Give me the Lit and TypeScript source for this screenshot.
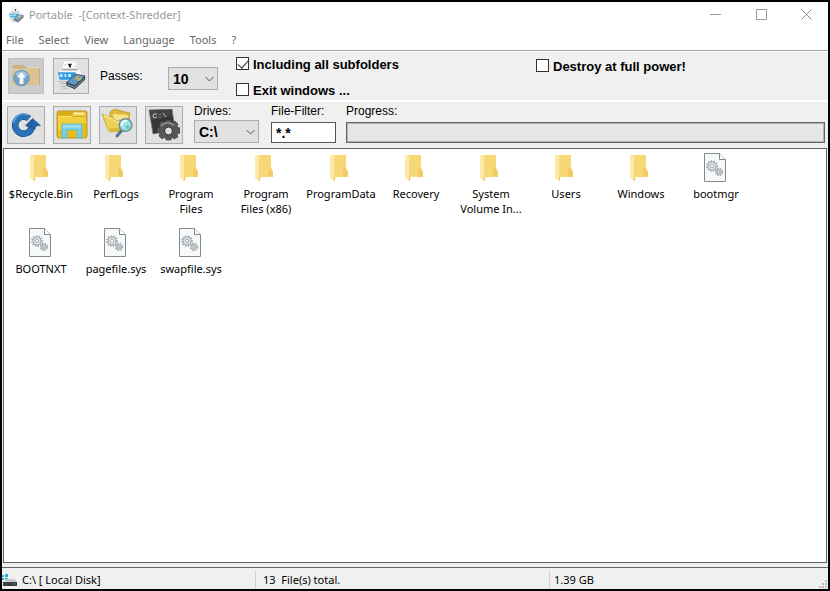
import { LitElement, html, css, svg, TemplateResult } from "lit";
import { customElement, property } from "lit/decorators.js";

const shredderIcon = svg`
  <svg viewBox="0 0 32 34" aria-hidden="true">
    <path d="M8 1h13l2 9H6z" fill="#fdfdfd" stroke="#d2d2d4" stroke-width=".6"/>
    <path d="M13 4h4v1h-1v3h-2V6h-1z" fill="#222"/><path d="M9 5h2M19 7h2" stroke="#bbb"/>
    <path d="M3 12l2-3h19l3 3v5H3z" fill="#fbfbfc" stroke="#c4c6ca" stroke-width=".6"/>
    <path d="M6 10.500h17" stroke="#77797d"/>
    <path d="M2 13h19v8H4z" fill="#2f9be0"/>
    <path d="M4 15h3v3H4zM9 15h2v3H9zM13 15h3v3h-3z" fill="#bfe6fa"/>
    <path d="M2 23h10M4 25h8M5 28h6M7 30h6" stroke="#b4b7bb" stroke-width="1"/>
    <path d="M11 24l10-9 10 2v4L20 31l-9-4z" fill="#2c4355"/>
    <path d="M11 24l10-9 10 2-11 10z" fill="#6f95b4" stroke="#2b3d4a" stroke-width=".6"/>
    <path d="M14 23.500l7-7 4 1-7 7z" fill="#4f9bd5"/>
    <path d="M20 20l3-3 2 1-3 3z" fill="#f1a63a"/>
    <path d="M23 21l3-2.500 2 .5-3 3z" fill="#9ccf5a"/>
    <path d="M12 26l8 3 10-9" stroke="#a8c2d3" fill="none" stroke-width=".8"/>
  </svg>`;

const upFolderIcon = svg`
  <svg viewBox="0 0 32 32" aria-hidden="true">
    <path d="M2 8l1-3h11l2 2h14v18H2z" fill="#cdb283"/>
    <path d="M2 9h14l2-2h12v18H2z" fill="#dcc396"/>
    <path d="M2 9.500h14l2-2h11" stroke="#eadbb9" fill="none"/>
    <path d="M29.500 8v17" stroke="#d1a966"/>
    <circle cx="11.500" cy="18" r="8" fill="#6fa2c4" stroke="#6795b3" stroke-width=".6"/>
    <path d="M5 15a7 6 0 0 1 13 0q-6 4-13 0z" fill="#a0c4da"/>
    <path d="M11.500 12l4.500 5.500h-2.500V24h-4v-6.500H7z" fill="#f5f7f8"/>
  </svg>`;

const refreshIcon = svg`
  <svg viewBox="0 0 32 32" aria-hidden="true">
    <path d="M19 9.500A8.500 8.500 0 1 0 22 18" fill="none" stroke="#174f8e" stroke-width="6.600"/>
    <path d="M19 9.500A8.500 8.500 0 1 0 22 18" fill="none" stroke="#2a72b8" stroke-width="5.400"/>
    <path d="M4 14A9.500 9.500 0 0 1 18 6" fill="none" stroke="#6ea6d8" stroke-width="1.500"/>
    <path d="M15.500 16.500L22.500 9.500l8 7-4.500.5-1 3-6-1.500z" fill="#2262a4" stroke="#174f8e" stroke-width=".6"/>
  </svg>`;

const diskFolderIcon = svg`
  <svg viewBox="0 0 32 32" aria-hidden="true">
    <path d="M1 4q0-2 2-2h26q2 0 2 2v23q0 2-2 2H3q-2 0-2-2z" fill="#e6bd1c" stroke="#a98312" stroke-width=".8"/>
    <path d="M2 8V3h14l2 2h12v3z" fill="#dcae16"/>
    <path d="M17 3.500h11l1 2H18z" fill="#fff1b4"/>
    <path d="M2 7.500h13l2-1.500h13" stroke="#f9e27a" fill="none"/>
    <path d="M2 8h28v6q-14 1-28 8z" fill="#f1cf3c"/>
    <path d="M6 29V15h20v14h-5v-8H11v8z" fill="#72cfe6" stroke="#4ab6d2" stroke-width=".6"/>
    <path d="M7 16h18v3H7z" fill="#97deee"/>
  </svg>`;

const searchFolderIcon = svg`
  <svg viewBox="0 0 32 32" aria-hidden="true">
    <path d="M8 6V3l4-3 4 1 12 3-2 14-14 3z" fill="#dcb83e" stroke="#b9932a" stroke-width=".7"/>
    <path d="M11 5l15 1-1 9-12 2z" fill="#f5e38c"/>
    <path d="M0 5l8 3 7 4 3-1 8 2-4 9-14 1-2-2z" fill="#edd25a" stroke="#bf9d30" stroke-width=".7"/>
    <path d="M2 6.500l6 2.500 7 4 9 .5" stroke="#fff2ac" fill="none"/>
    <path d="M9 23h12l2-5q-8 2-16 1z" fill="#d9b73c"/>
    <path d="M20 21l-5 6" stroke="#56798a" stroke-width="3" stroke-linecap="round"/>
    <circle cx="23.500" cy="16" r="6.300" fill="#9fe0e0" stroke="#6b8e9d" stroke-width="1.500"/>
    <path d="M20 17a4 4 0 0 1 5-5" fill="none" stroke="#effffc" stroke-width="2"/>
    <circle cx="25.500" cy="18" r="2" fill="#6cc7b6"/>
  </svg>`;

const commandIcon = svg`
  <svg viewBox="0 0 32 32" aria-hidden="true">
    <path d="M1 1l23-1 3 21-22 4z" fill="#343537" stroke="#77787a" stroke-width=".8"/>
    <path d="M2 2l21-1 1 6-21 4z" fill="#434446"/>
    <path d="M9 5q-4-1-4 2t4 1M12 5v1M12 8v1M15 4l3 4" stroke="#c4c4c4" fill="none"/>
    <path d="M18 11h5l1 3 3-2 3 3-1 3 3 1v5l-3 1 1 3-4 2-2-2-1 3h-5l-1-3-3 2-3-3 1-3-3-1v-4l3-1-1-4 3-2 3 2z" fill="#555658" stroke="#38393b" stroke-width=".6"/>
    <path d="M13 17q5-6 13-1" stroke="#929395" fill="none" stroke-width="1.500"/>
    <circle cx="20.500" cy="22" r="4" fill="#dcdcdc" stroke="#2c2d2e"/>
  </svg>`;

const folderIcon = svg`
  <svg viewBox="0 0 20 28" aria-hidden="true">
    <path d="M3 1h14v14l2 3v5H4z" fill="#f8d775"/>
    <path d="M14 16l1-2h2l2 4v5h-5z" fill="#f2cb64"/>
    <path d="M1 1h3l3 3v20l-2 3-4-3z" fill="#fdeaa9"/>
    <path d="M6 4v17l-1 6" stroke="#edc45e" fill="none"/>
  </svg>`;

const gear = (x: number, y: number, r: number) => svg`
  <circle cx=${x} cy=${y} r=${r} fill="none" stroke="#a3abb0" stroke-width="1.600" stroke-dasharray="1.6 1.1"/>
  <circle cx=${x} cy=${y} r=${r - 1} fill="#e3e7e9" stroke="#949da2" stroke-width=".8"/>
  <circle cx=${x} cy=${y} r=${r / 3} fill="#fff" stroke="#949da2" stroke-width=".8"/>`;

const systemFileIcon = svg`
  <svg viewBox="0 0 22 29" aria-hidden="true">
    <path d="M.5.5h15l6 6v22H.5z" fill="#f6f8f9" stroke="#858a8d"/>
    <path d="M15.500.5v6h6" fill="#fff" stroke="#858a8d"/>
    ${gear(8, 13, 5)}${gear(15, 19, 3.4)}
  </svg>`;

const driveIcon = svg`
  <svg viewBox="0 0 15 13" aria-hidden="true">
    <path d="M0 1h2v2H0zM3 0h3v3H3zM0 4h2v2H0zM3 4h3v2H3z" fill="#1fb2df"/>
    <path d="M2 8l2-3h9l2 3z" fill="#c9cccd"/>
    <path d="M1 8h14v4H1z" fill="#3b4042"/>
    <path d="M12 10h1" stroke="#7df08a"/>
  </svg>`;

interface Entry {
  name: string;
  folder: boolean;
}

const folders = [
  "$Recycle.Bin", "PerfLogs", "Program Files", "Program Files (x86)", "ProgramData",
  "Recovery", "System Volume In...", "Users", "Windows",
];
const files = ["bootmgr", "BOOTNXT", "pagefile.sys", "swapfile.sys"];
const entries: Entry[] = [
  ...folders.map((name) => ({ name, folder: true })),
  ...files.map((name) => ({ name, folder: false })),
];

@customElement("file-entry")
export class FileEntry extends LitElement {
  @property() name = "";
  @property({ type: Boolean }) folder = false;

  static styles = css`
    :host { display: block; }
    .entry {
      width: 74px;
      padding: 4px 0 0;
      border: 0;
      background: none;
      color: #000;
      font: 11px/15px "Noto Sans", "Open Sans", sans-serif;
      display: flex;
      flex-direction: column;
      align-items: center;
    }
    .picture { height: 29px; width: 24px; margin-bottom: 4px; }
    .picture svg { display: block; height: 29px; width: 22px; }
    .folder svg { width: 20px; height: 28px; margin-top: 1px; }
    .name { min-width: min-content; max-width: 66px; }
  `;

  render() {
    return html`<button class="entry">
      <span class="picture ${this.folder ? "folder" : ""}">${this.folder ? folderIcon : systemFileIcon}</span>
      <span class="name">${this.name}</span>
    </button>`;
  }
}

@customElement("app-root")
export class AppRoot extends LitElement {
  static styles = css`
    :host {
      display: block;
      --ui: "Noto Sans", "Open Sans", sans-serif;
      --classic: "Liberation Sans", Arial, sans-serif;
      --face: #f0f0f0;
    }
    * { box-sizing: border-box; }
    button, input, select { margin: 0; font: inherit; color: inherit; }
    svg { display: block; }
    .window {
      min-height: 100vh;
      display: flex;
      flex-direction: column;
      border: 2px solid #000;
      background: var(--face);
      font: 11px/16px var(--ui);
      color: #000;
    }
    .titlebar {
      display: flex;
      align-items: center;
      height: 26px;
      padding-left: 6px;
      background: #fff;
      color: #999;
    }
    .titlebar .app { width: 16px; height: 16px; margin-right: 5px; opacity: .8; }
    .title { flex: 1; margin: 0; font: inherit; white-space: pre; }
    .caption {
      width: 46px;
      height: 24px;
      padding: 0;
      border: 0;
      background: none;
      display: grid;
      place-items: center;
      align-self: flex-start;
    }
    .caption:last-child { width: 44px; }
    .caption svg { width: 11px; height: 11px; }
    .menu {
      display: flex;
      gap: 15px;
      height: 22px;
      padding: 3px 4px 0;
      background: #fff;
      color: #666;
    }
    .menu button { padding: 0; border: 0; background: none; align-self: flex-start; line-height: 18px; }
    .tools { display: flex; font-family: var(--classic); font-size: 12px; }
    .tools.main {
      height: 52px;
      padding: 6px 6px 0;
      border-top: 1px solid #a0a0a0;
      border-bottom: 2px solid #fff;
      box-shadow: inset 0 1px #fff;
    }
    .tools.drive { padding: 4px 3px 0 5px; height: 46px; }
    .tool {
      flex: none;
      width: 38px;
      height: 38px;
      margin-right: 8px;
      padding: 2px;
      border: 1px solid #adadad;
      background: #e1e1e1;
      display: grid;
      place-items: center;
    }
    .tool svg { width: 32px; height: 32px; }
    .main .tool { width: 36px; height: 36px; margin: 1px 9px 0 0; padding: 0; }
    .tool:disabled { background: #ccc; border-color: #bfbfbf; }
    .passes { display: flex; padding-left: 2px; width: 138px; }
    .passes label { width: 68px; padding-top: 11px; }
    .passes .combo { width: 50px; margin-top: 10px; }
    .combo { display: grid; height: 23px; font-weight: bold; }
    .combo select, .combo svg { grid-area: 1 / 1; }
    .combo select {
      appearance: none;
      width: 100%;
      padding: 0 4px;
      border: 1px solid #adadad;
      border-radius: 0;
      background: #e1e1e1;
      font-size: 14px;
      height: 23px;
    }
    .combo svg { width: 9px; height: 6px; justify-self: end; align-self: center; margin-right: 4px; pointer-events: none; }
    .checks { display: grid; grid-template-rows: 26px 20px; align-content: start; }
    .checks.scope { width: 300px; }
    .checks.power { padding-top: 2px; }
    .check { display: flex; align-items: flex-start; gap: 4px; font: bold 13px/15px var(--classic); white-space: nowrap; }
    .check input {
      appearance: none;
      width: 13px;
      height: 13px;
      border: 1px solid #333;
      background: #fff;
      display: grid;
      place-items: center;
    }
    .check input:checked::after {
      content: "";
      width: 9px;
      height: 5px;
      border: solid #333;
      border-width: 0 0 1px 1px;
      transform: translateY(-1px) rotate(-48deg);
    }
    .field { display: flex; flex-direction: column; margin-left: 12px; }
    .field label { height: 16px; line-height: 12px; margin-top: -1px; }
    .field.drives { margin-left: 3px; width: 65px; }
    .field.drives .combo { margin-top: -1px; }
    .field.filter { width: 65px; }
    .field.progress { flex: 1; margin-left: 10px; }
    .field input {
      width: 100%;
      height: 21px;
      margin-top: 1px;
      padding: 0 4px;
      border: 1px solid #555;
      background: #fff;
      font-size: 14px;
      font-weight: bold;
    }
    progress {
      appearance: none;
      display: block;
      width: 100%;
      height: 21px;
      margin-top: 1px;
      border: 1px solid #646464;
      box-shadow: inset 0 0 0 1px #b4b4b4;
      background: #e6e6e6;
    }
    progress::-webkit-progress-bar { background: transparent; }
    .list {
      flex: 1;
      display: grid;
      grid-template-columns: repeat(auto-fill, 75px);
      grid-auto-rows: 75px;
      align-content: start;
      margin: 0 1px 4px;
      border: 1px solid #646464;
      background: #fff;
    }
    .status {
      display: grid;
      grid-template-columns: 253fr 294fr 279fr;
      height: 22px;
      border-top: 1px solid #646464;
      padding-top: 2px;
      line-height: 18px;
      white-space: pre;
    }
    .pane { display: flex; align-items: flex-end; padding-left: 5px; }
    .pane + .pane { border-left: 1px solid #d0d0d0; padding-left: 7px; }
    .pane.disk { padding-left: 0; gap: 5px; }
    .pane.disk svg { width: 15px; height: 13px; margin-bottom: 2px; }
    .pane.size { padding-left: 4px; }
    .pane.size svg { width: 10px; height: 10px; margin-left: auto; }
  `;

  private tool(label: string, icon: TemplateResult | unknown, disabled = false) {
    return html`<button class="tool" aria-label=${label} title=${label} ?disabled=${disabled}>${icon}</button>`;
  }

  private combo(id: string, value: string) {
    return html`<div class="combo">
      <select id=${id}><option>${value}</option></select>
      <svg viewBox="0 0 9 6" aria-hidden="true"><path d="M.5 1l4 4 4-4" fill="none" stroke="#555"/></svg>
    </div>`;
  }

  render() {
    return html`
      <div class="window">
        <header class="titlebar">
          <span class="app">${shredderIcon}</span>
          <h1 class="title">Portable  -[Context-Shredder]</h1>
          <button class="caption" aria-label="Minimize"><svg viewBox="0 0 11 11"><path d="M0 5.500h11" stroke="#999"/></svg></button>
          <button class="caption" aria-label="Maximize"><svg viewBox="0 0 11 11"><path d="M.5.5h10v10H.5z" stroke="#999" fill="none"/></svg></button>
          <button class="caption" aria-label="Close"><svg viewBox="0 0 11 11"><path d="M.5.5l10 10M10.500.5l-10 10" stroke="#888"/></svg></button>
        </header>
        <nav class="menu">
          ${["File", "Select", "View", "Language", "Tools", "?"].map((item) => html`<button>${item}</button>`)}
        </nav>
        <div class="tools main">
          ${this.tool("Up one level", upFolderIcon, true)}
          ${this.tool("Shred", shredderIcon)}
          <div class="passes"><label for="passes">Passes:</label>${this.combo("passes", "10")}</div>
          <div class="checks scope">
            <label class="check"><input type="checkbox" checked /><span>Including all subfolders</span></label>
            <label class="check"><input type="checkbox" /><span>Exit windows ...</span></label>
          </div>
          <div class="checks power">
            <label class="check"><input type="checkbox" /><span>Destroy at full power!</span></label>
          </div>
        </div>
        <div class="tools drive">
          ${this.tool("Refresh", refreshIcon)}
          ${this.tool("Open Explorer", diskFolderIcon)}
          ${this.tool("Search folder", searchFolderIcon)}
          ${this.tool("Command prompt", commandIcon)}
          <div class="field drives"><label for="drives">Drives:</label>${this.combo("drives", "C:\\")}</div>
          <div class="field filter"><label for="filter">File-Filter:</label><input id="filter" type="text" value="*.*" /></div>
          <div class="field progress"><label for="progress">Progress:</label><progress id="progress" value="0" max="100"></progress></div>
        </div>
        <main class="list">
          ${entries.map((e) => html`<file-entry .name=${e.name} .folder=${e.folder}></file-entry>`)}
        </main>
        <footer class="status">
          <div class="pane disk">${driveIcon}<span>C:\\ [ Local Disk]</span></div>
          <div class="pane total"><span>13  File(s) total.</span></div>
          <div class="pane size"><span>1.39 GB</span>
            <svg viewBox="0 0 10 10" aria-hidden="true"><path d="M7 1h2v2H7zM4 4h2v2H4zM7 4h2v2H7zM1 7h2v2H1zM4 7h2v2H4zM7 7h2v2H7z" fill="#bbb"/></svg>
          </div>
        </footer>
      </div>`;
  }
}
